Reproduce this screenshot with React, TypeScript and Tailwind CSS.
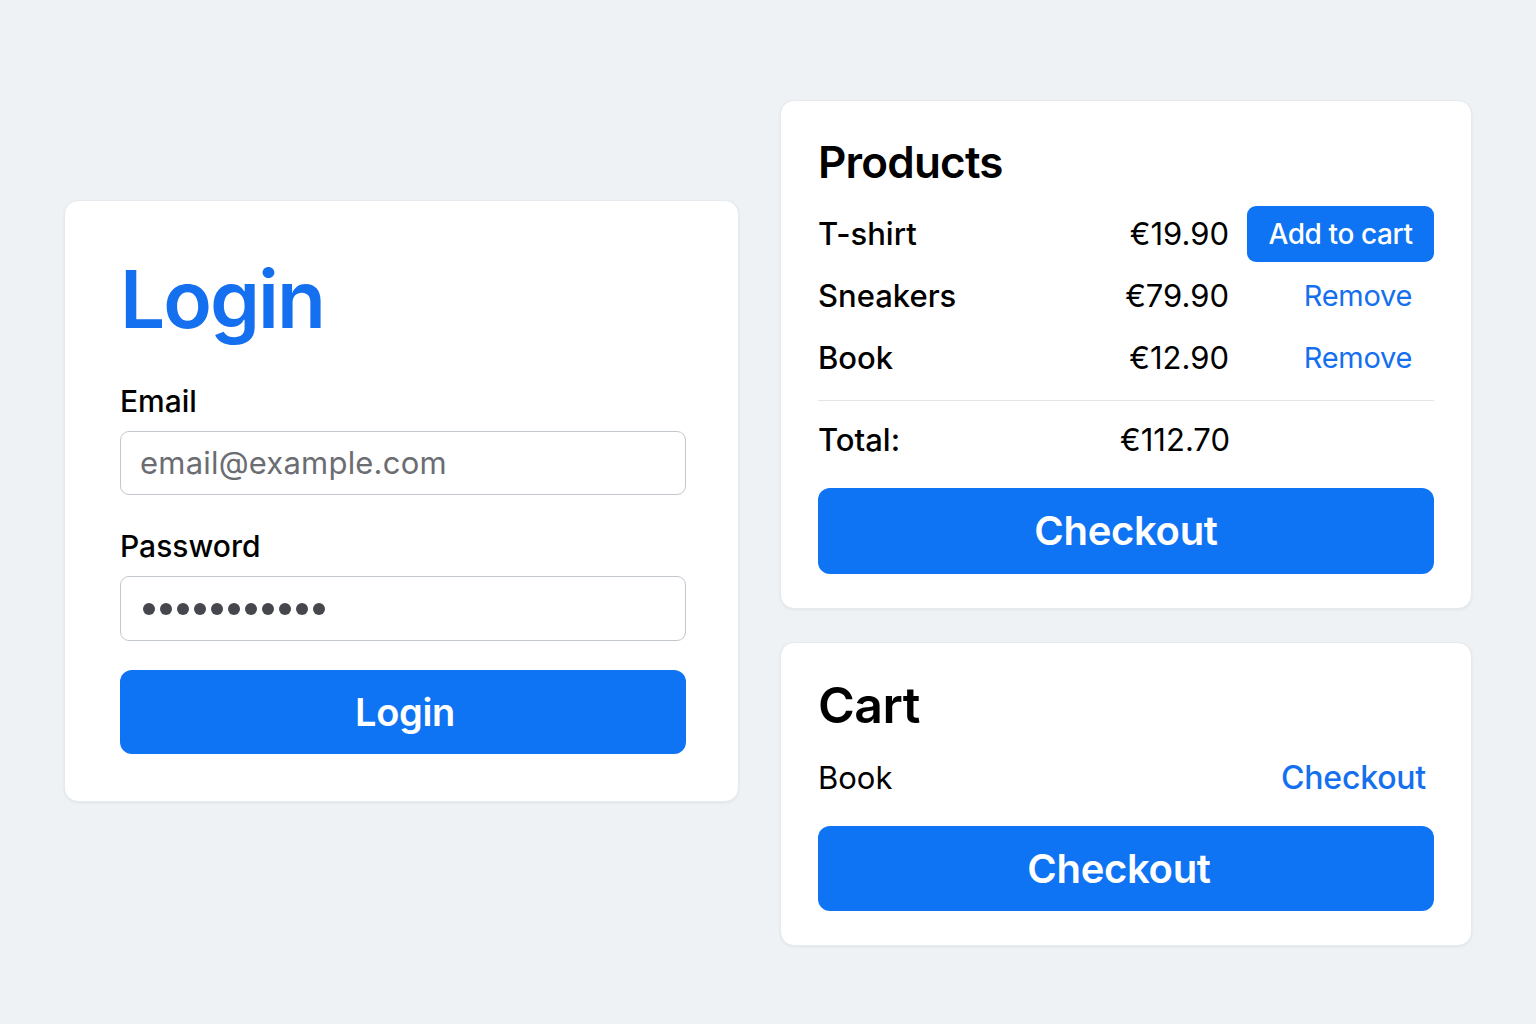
import React from 'react'

const products = [
  { name: 'T-shirt', price: '€19.90', action: 'add' },
  { name: 'Sneakers', price: '€79.90', action: 'remove' },
  { name: 'Book', price: '€12.90', action: 'remove' },
]

function LoginCard(){
  return <div className="mt-[100px] w-[675px] rounded-[14px] border border-[#e6e9ed] bg-white pb-[47px] pl-[55px] pr-[52px] pt-[58px] shadow-[0_1px_3px_rgba(0,0,0,0.06)]">
    <h1 className="text-[80px] font-semibold leading-none tracking-[-2px] text-[#1570ef]">Login</h1>

    <div className="mt-[44px] text-[30px] font-medium leading-[36px] text-black">Email</div>
    <div className="mt-[12px] flex h-[64px] items-center rounded-[9px] border border-[#c3c8cf] px-[19px] text-[31px] tracking-[0.2px] text-[#6b6d72]">
      email@example.com
    </div>

    <div className="mt-[33px] text-[30px] font-medium leading-[36px] text-black">Password</div>
    <div className="mt-[12px] flex h-[65px] items-center gap-[5px] rounded-[9px] border border-[#c3c8cf] px-[22px]">
      {
        Array.from({ length: 11 }).map((_, index)=>{
          return <span className="h-[12px] w-[12px] rounded-full bg-[#46474c]" key={index}></span>
        })
      }
    </div>

    <button className="mt-[29px] flex h-[84px] w-full items-center justify-center rounded-[12px] bg-[#0f74f4] pl-[4px] text-[38px] font-semibold tracking-[-0.3px] text-white">
      Login
    </button>
  </div>
}

function ProductsCard(){
  return <div className="rounded-[14px] border border-[#e6e9ed] bg-white px-[37px] pb-[34px] pt-[38px] shadow-[0_1px_3px_rgba(0,0,0,0.06)]">
    <h2 className="text-[44px] font-semibold leading-[46px] tracking-[-0.8px] text-black">Products</h2>

    <div className="mt-[18px]">
      {
        products.map((node, index)=>{
          return <div className="flex h-[62px] items-center" key={index}>
            <div className="flex-1 text-[31px] font-medium text-black">{node.name}</div>
            <div className="w-[140px] text-right text-[31px] text-black">{node.price}</div>
            <div className="ml-[18px] flex w-[187px] justify-end">
              {
                node.action === 'add'
                  ? <button className="h-[56px] w-[187px] rounded-[9px] bg-[#0f74f4] text-[28px] font-medium tracking-[-0.4px] text-white">Add to cart</button>
                  : <span className="pr-[22px] text-[29px] tracking-[-0.3px] text-[#1570ef]">Remove</span>
              }
            </div>
          </div>
        })
      }
    </div>

    <div className="mt-[11px] h-px bg-[#e2e4e8]"></div>

    <div className="mt-[8px] flex h-[62px] items-center">
      <div className="w-[200px] text-[31px] font-medium text-black">Total:</div>
      <div className="w-[212px] text-right text-[31px] text-black">€112.70</div>
    </div>

    <button className="mt-[17px] flex h-[86px] w-full items-center justify-center rounded-[12px] bg-[#0f74f4] text-[40px] font-semibold tracking-[-0.3px] text-white">
      Checkout
    </button>
  </div>
}

function CartCard(){
  return <div className="rounded-[14px] border border-[#e6e9ed] bg-white px-[37px] pb-[34px] pt-[38px] shadow-[0_1px_3px_rgba(0,0,0,0.06)]">
    <h2 className="text-[50px] font-semibold leading-[48px] tracking-[-0.5px] text-black">Cart</h2>

    <div className="mt-[18px] flex h-[62px] items-center justify-between">
      <div className="text-[31px] text-black">Book</div>
      <div className="pr-[8px] text-[32px] font-medium tracking-[-0.2px] text-[#1570ef]">Checkout</div>
    </div>

    <button className="mt-[17px] flex h-[85px] w-full items-center justify-center rounded-[12px] bg-[#0f74f4] pr-[14px] text-[40px] font-semibold tracking-[-0.3px] text-white">
      Checkout
    </button>
  </div>
}

export default function App(){
  return <div className="min-h-[1024px] w-full bg-[#eff2f5] font-['Inter','Liberation_Sans',sans-serif]">
    <div className="flex items-start gap-[41px] pl-[64px] pr-[64px] pt-[100px]">
      <LoginCard />
      <div className="flex w-[692px] flex-col gap-[33px]">
        <ProductsCard />
        <CartCard />
      </div>
    </div>
  </div>
}
